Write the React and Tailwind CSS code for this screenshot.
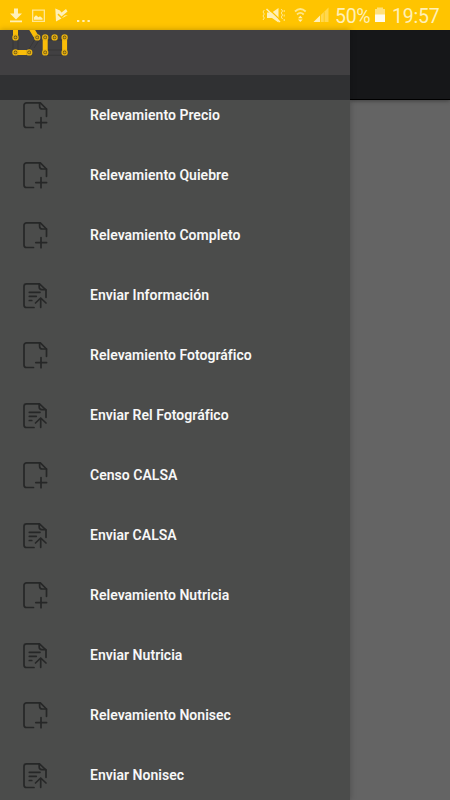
const MENU_ITEMS = [
	{ label: "Relevamiento Precio", icon: "add" },
	{ label: "Relevamiento Quiebre", icon: "add" },
	{ label: "Relevamiento Completo", icon: "add" },
	{ label: "Enviar Información", icon: "send" },
	{ label: "Relevamiento Fotográfico", icon: "add" },
	{ label: "Enviar Rel Fotográfico", icon: "send" },
	{ label: "Censo CALSA", icon: "add" },
	{ label: "Enviar CALSA", icon: "send" },
	{ label: "Relevamiento Nutricia", icon: "add" },
	{ label: "Enviar Nutricia", icon: "send" },
	{ label: "Relevamiento Nonisec", icon: "add" },
	{ label: "Enviar Nonisec", icon: "send" },
];

const LOGO_BOLTS = [
	[15.5, 7.4],
	[37.2, 7.4],
	[45.2, 7.4],
	[54.6, 7.4],
	[64.6, 7.4],
	[15.5, 22.4],
	[29.2, 22.4],
	[45.2, 22.4],
	[64.6, 22.4],
];

const AddIcon = () => (
	<svg width="30" height="30" viewBox="0 0 30 30" fill="none" stroke="#262727" strokeWidth="1.7" strokeLinecap="round" strokeLinejoin="round">
		<path d="M13.5 27.5H6.5A2.5 2.5 0 0 1 4 25V5.3a2.5 2.5 0 0 1 2.5-2.5H20.3L26.5 9V16.3" />
		<path d="M19.6 3v3.2a2.8 2.8 0 0 0 2.8 2.8h4" />
		<path d="M21 17.5v10.2M15.8 22.6h10.8" />
	</svg>
);

const SendIcon = () => (
	<svg width="30" height="30" viewBox="0 0 30 30" fill="none" stroke="#262727" strokeWidth="1.7" strokeLinecap="round" strokeLinejoin="round">
		<path d="M14 27.5H6.5A2.5 2.5 0 0 1 4 25V6.3a2.5 2.5 0 0 1 2.5-2.5H19.5L26 10V17.3" />
		<path d="M19.2 4v3a2.6 2.6 0 0 0 2.6 2.6h4" />
		<path d="M9.3 12.3H20M9.3 16.3H16.3M9.3 20.5H11.8" />
		<path d="M20.7 27.3V18M15.5 23L20.7 18L26 23" />
	</svg>
);

const Logo = () => (
	<svg width="80" height="30" viewBox="0 0 80 30" fill="none">
		<path d="M13 10V20M18 10V20M34 18L40 9M29 19L35 9M48 10H62M48 20H62M45 25.3H64" stroke="#353535" strokeWidth="0.8" />
		<g stroke="#fabd08" strokeWidth="5">
			<path d="M15.5 0V5M31 -2L35.8 6M45.2 9.8V20M64.6 9.8V20M18 22.4H26.8" />
		</g>
		{LOGO_BOLTS.map(([x, y]) => (
			<g key={`${x}-${y}`}>
				<circle cx={x} cy={y} r="2.5" fill="#5a4818" stroke="#e9b20f" strokeWidth="1.4" />
				<circle cx={x} cy={y} r="1.2" fill="#d6a414" />
			</g>
		))}
	</svg>
);

const StatusBar = () => (
	<div className="flex h-[30px] items-center bg-[#ffc400] text-[#fff0b8]">
		<svg className="shrink-0" width="92" height="30" viewBox="0 0 92 30" fill="#fff0b8">
			<path d="M14 8.5h4v5h4l-6 6l-6-6h4zM10 20.5h12v1.8H10z" />
			<path fillRule="evenodd" d="M32 9.5h13V22H32zM33.3 10.8v9.9h10.4v-9.9z" opacity="0.8" />
			<path d="M34 19.8v-2.6l2-2l2.5 2l1.5-1l2.5 2v1.6z" />
			<path d="M55.3 8.5L60 10.5L61.5 12.5L66 9L67.5 11.5L61.5 16.5L58.5 13.5L57.5 14.8L61.5 18.5L64.5 15.5L67.8 15L56 21.5Z" />
			<path d="M77 20h2.3v2H77zM82.3 20h2.3v2h-2.3zM87.5 20h2.3v2h-2.3z" />
		</svg>
		<svg className="ml-[168px] shrink-0" width="72" height="30" viewBox="260 0 72 30" fill="none">
			<path d="M267 12.5h5l6.5-4.5v14.5l-6.5-4.5h-5z" fill="#fff0b8" />
			<path d="M267.8 8L281.2 21" stroke="#ffc400" strokeWidth="1.2" />
			<path d="M266.5 9L280 22" stroke="#fff0b8" strokeWidth="1.5" />
			<path d="M264.3 10l-1.3 2l1.3 2l-1.3 2l1.3 2l-1.3 2M281.3 9l1.2 2l-1.2 2l1.2 2l-1.2 2l1.2 2M284.2 10v2M284.2 14.5v2M284.2 19v2" stroke="#ffe994" strokeWidth="1" />
			<path d="M295 11.5Q300.3 6.5 305.7 11.5M297 14.5Q300.3 11.3 303.7 14.5" stroke="#ffe78b" strokeWidth="1.8" />
			<path d="M298 18.3l2.3-2.5l2.4 2.5zM298 19.5h4.7l-2.4 2.5z" fill="#fff0b8" />
			<path d="M324.5 11.5L328.5 7.5V22H324.5Z" fill="#ffd84f" />
			<path d="M320.8 15L323.8 12V22H320.8Z" fill="#ffd84f" />
			<path d="M313.5 22L320 15.5V22Z" fill="#fff0b8" />
		</svg>
		<span className="ml-[3px] w-9 pt-[3px] text-[19.5px] leading-[30px] tracking-[-0.3px] whitespace-nowrap">50%</span>
		<svg className="ml-1 shrink-0" width="10" height="30" viewBox="0 0 10 30">
			<path d="M2 7.5h6v1.5h2V15H0V9h2z" fill="#ffe07b" />
			<path d="M0 14.5h10V22H0z" fill="#fffbed" />
		</svg>
		<span className="ml-[7px] pt-[3px] text-[19.5px] leading-[30px] tracking-[-0.2px] whitespace-nowrap">19:57</span>
	</div>
);

const Drawer = () => (
	<nav className="flex w-[350px] shrink-0 flex-col bg-[#4b4c4b] shadow-[0_0_6px_rgba(0,0,0,0.25)]">
		<div className="h-[45px] shrink-0 bg-[#414042]">
			<Logo />
		</div>
		<div className="h-[25px] shrink-0 bg-[#303133]"></div>
		<div className="flex-1 overflow-hidden">
			<ul className="-mt-[15px]">
				{MENU_ITEMS.map((item) => (
					<li key={item.label} className="flex h-[60px] items-center pl-5">
						{item.icon === "add" ? <AddIcon /> : <SendIcon />}
						<span className="ml-10 text-[14px] font-semibold tracking-[0.03px] text-[#f7f7f7]">{item.label}</span>
					</li>
				))}
			</ul>
		</div>
	</nav>
);

const App = () => {
	return (
		<div className="flex h-[800px] w-[450px] flex-col overflow-hidden font-['Roboto',sans-serif]">
			<StatusBar />
			<div className="flex min-h-0 flex-1">
				<Drawer />
				<main className="-z-10 flex-1 bg-[#646464]">
					<div className="h-[70px] border-b border-black bg-[#161719] shadow-[0_1px_4px_rgba(0,0,0,0.35)]"></div>
				</main>
			</div>
		</div>
	);
};

export default App;
